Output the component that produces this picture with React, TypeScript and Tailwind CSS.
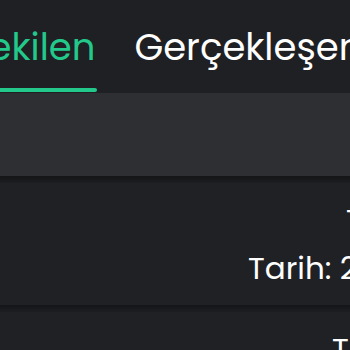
import React from "react";

export default function App() {
  const font = { fontFamily: '"Poppins", "Open Sans", "Noto Sans", sans-serif' };
  return (
    <div className="w-[350px] h-[350px] overflow-hidden bg-[#202125]" style={font}>
      <div className="h-[93px] bg-[#1f2023] flex items-end">
        <div className="flex items-end -ml-[40px] gap-[37px] whitespace-nowrap">
          <div className="flex flex-col items-stretch">
            <span className="text-[37px] leading-[48px] text-[#22c98b] pr-[2px]">Çekilen</span>
            <div className="h-[4px] mt-[17px] mb-[1px] bg-[#22c98b] rounded-r-full" />
          </div>
          <div className="flex flex-col">
            <span className="text-[37px] leading-[48px] text-white">Gerçekleşen</span>
            <div className="h-[4px] mt-[17px] mb-[1px]" />
          </div>
        </div>
      </div>
      <div className="h-[83px] bg-[#2e2f33]" />
      <div className="h-[7px] bg-gradient-to-b from-[#141517] to-[#1d1e21]" />
      <div className="h-[122px] bg-[#202125] pt-[13px] text-white text-[31px] leading-[48px] whitespace-nowrap">
        <div className="pl-[346px]">Tutar: 1.250,00 ₺</div>
        <div className="pl-[248px]">Tarih: 2023</div>
      </div>
      <div className="h-[7px] bg-gradient-to-b from-[#141517] to-[#1d1e21]" />
      <div className="h-[122px] bg-[#202125] pt-[13px] text-white text-[31px] leading-[48px] whitespace-nowrap">
        <div className="pl-[332px]">Tutar: 980,00 ₺</div>
        <div className="pl-[248px]">Tarih: 2023</div>
      </div>
    </div>
  );
}
